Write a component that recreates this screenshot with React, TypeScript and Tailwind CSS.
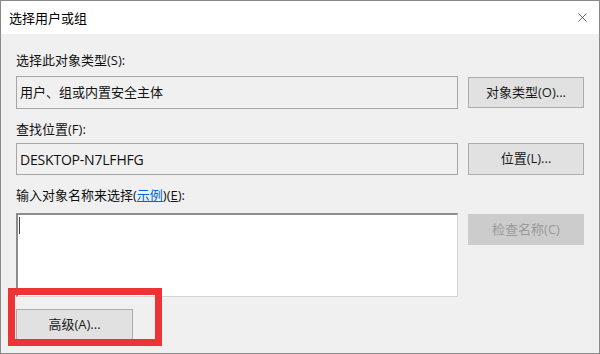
import { X } from 'lucide-react';

const font = "font-['Open_Sans','Noto_Sans_CJK_SC',sans-serif]";

const WinButton = ({ label, disabled = false, className = '' }: { label: string; disabled?: boolean; className?: string }) => (
  <div
    className={`flex items-center justify-center border text-[13px] ${
      disabled ? 'bg-[#cccccc] border-[#cccccc] text-[#9a9a9a]' : 'bg-[#e1e1e1] border-[#adadad] text-[#1a1a1a]'
    } ${className}`}
  >
    {label}
  </div>
);

const App = () => {
  return (
    <div className={`relative w-[600px] h-[354px] overflow-hidden bg-[#f0f0f0] border border-[#8a8a8a] ${font}`}>
      {/* title bar */}
      <div className="flex h-[33px] items-center justify-between bg-white pl-[8px] pr-[9px] text-[13px] text-black">
        <span className="font-['Noto_Sans_CJK_SC',sans-serif]">选择用户或组</span>
        <X className="h-[15px] w-[15px] text-[#333]" strokeWidth={1.2} />
      </div>

      <div className="flex flex-col px-[15px] pr-[14px] text-[13px] text-[#111]">
        <div className="mt-[17px] h-[18px] leading-[18px]">选择此对象类型(S):</div>
        <div className="mt-[7px] flex items-start gap-[10px]">
          <div className="flex h-[33px] w-[442px] items-center border border-[#a6a6a6] px-[3px]">
            用户、组或内置安全主体
          </div>
          <WinButton label="对象类型(O)..." className="mt-[1px] h-[31px] w-[116px]" />
        </div>

        <div className="mt-[11px] h-[18px] leading-[18px]">查找位置(F):</div>
        <div className="mt-[5px] flex items-start gap-[10px]">
          <div className="flex h-[32px] w-[442px] items-center border border-[#a6a6a6] px-[3px] text-[14px] tracking-[-0.2px]">
            DESKTOP-N7LFHFG
          </div>
          <WinButton label="位置(L)..." className="h-[32px] w-[116px]" />
        </div>

        <div className="mt-[11px] h-[18px] leading-[18px]">
          输入对象名称来选择(<span className="text-[#0066cc] underline">示例</span>)(<span className="underline">E</span>):
        </div>
        <div className="mt-[9px] flex items-start gap-[10px]">
          <div className="h-[84px] w-[442px] border-t-2 border-l-2 border-r border-b border-t-[#8c8c8c] border-l-[#8c8c8c] border-r-[#d4d4d4] border-b-[#d4d4d4] bg-white pl-[1px] pt-[2px]">
            <div className="h-[17px] w-px bg-[#444]" />
          </div>
          <WinButton label="检查名称(C)" disabled className="mt-[1px] h-[31px] w-[116px]" />
        </div>

        <div className="mt-[12px]">
          <WinButton label="高级(A)..." className="h-[31px] w-[117px]" />
        </div>
      </div>

      {/* red highlight annotation */}
      <div className="absolute left-[7px] top-[287px] h-[58px] w-[154px] border-[7px] border-[#ec3434]" />
    </div>
  );
};

export default App;
